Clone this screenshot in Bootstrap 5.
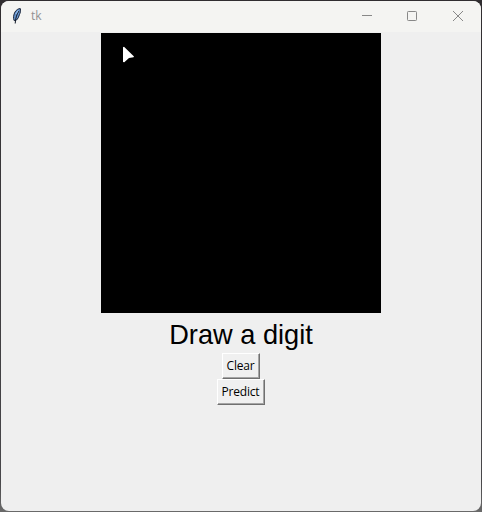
<!DOCTYPE html>
<html lang="en">
<head>
<meta charset="utf-8">
<title>tk</title>
<link href="https://cdn.jsdelivr.net/npm/bootstrap@5.3.0/dist/css/bootstrap.min.css" rel="stylesheet">
<style>
html, body { height: 100%; }
body { background: linear-gradient(#302d30, #48474a 94%, #6a6a6a); padding: 1px; overflow: hidden; }
.tk-window { background: #efefef; border-radius: 8px; height: 510px; width: 480px; }
.titlebar { height: 31px; background: #f4f4f2; padding: 0 0 2px 10px; }
.title-text { font: 12px/29px "Open Sans", sans-serif; color: #929292; margin-left: 7px; }
.win-btn { width: 46px; height: 29px; background: none; color: #888; }
.draw-area { width: 280px; height: 280px; background: #000; margin-top: 1px; padding: 13px 0 0 21px; }
.prompt { font: 27.2px/38px "Liberation Sans", Arial, sans-serif; color: #000; height: 39px; padding-top: 3px; }
.button-stack { margin: 1px 1px 0 0; }
.tk-btn { font: 12px/22px "Open Sans", "Noto Sans", sans-serif; color: #000; background: #f0f0f0; height: 26px; padding: 0 0 1px; border: 1px solid; border-color: #fff #707070 #707070 #fff; box-shadow: inset -1px -1px #a5a5a5; white-space: nowrap; letter-spacing: -.2px; }
.clear-btn { width: 38px; }
.predict-btn { width: 48px; }
</style>
</head>
<body>
<div class="tk-window overflow-hidden">
  <header class="titlebar d-flex align-items-center">
    <svg width="13" height="18" viewBox="0 0 13 18" aria-hidden="true">
      <path d="M3.1 13.5C2 11 2.6 7.5 4 5 5.4 2.8 7.3 1.6 9.3 1.6c.5 2.2 0 4.2-.9 6.1l-1.1 3-1.6 2.2z" fill="#6694ce" stroke="#172238"/>
      <path d="M8 3.8C6 7 4.5 10.5 4.2 16.5" fill="none" stroke="#101826"/>
      <path d="M4.7 7 7.4 3.5" stroke="#9cc3ef"/>
    </svg>
    <span class="title-text">tk</span>
    <div class="d-flex ms-auto">
      <button class="win-btn border-0 p-0 d-flex align-items-center justify-content-center" aria-label="Minimize"><svg width="12" height="12"><path d="M2 5.5h10" stroke="currentColor"/></svg></button>
      <button class="win-btn border-0 p-0 d-flex align-items-center justify-content-center" aria-label="Maximize"><svg width="12" height="12"><rect x="1.5" y="1.5" width="9" height="9" rx=".8" fill="none" stroke="currentColor"/></svg></button>
      <button class="win-btn border-0 p-0 d-flex align-items-center justify-content-center" aria-label="Close"><svg width="12" height="12"><path d="m1 1 10 10M11 1 1 11" stroke="currentColor"/></svg></button>
    </div>
  </header>
  <main class="d-flex flex-column align-items-center">
    <div class="draw-area">
      <svg class="d-block" width="13" height="18"><path d="M1 1.2 2 .8 12 10.5 11.5 11.2 7 12 2.3 16.3 1 16z" fill="#fff"/></svg>
    </div>
    <div class="prompt">Draw a digit</div>
    <div class="button-stack d-flex flex-column align-items-center">
      <button class="tk-btn clear-btn">Clear</button>
      <button class="tk-btn predict-btn">Predict</button>
    </div>
  </main>
</div>
<script src="https://cdn.jsdelivr.net/npm/bootstrap@5.3.0/dist/js/bootstrap.bundle.min.js"></script>
</body>
</html>
